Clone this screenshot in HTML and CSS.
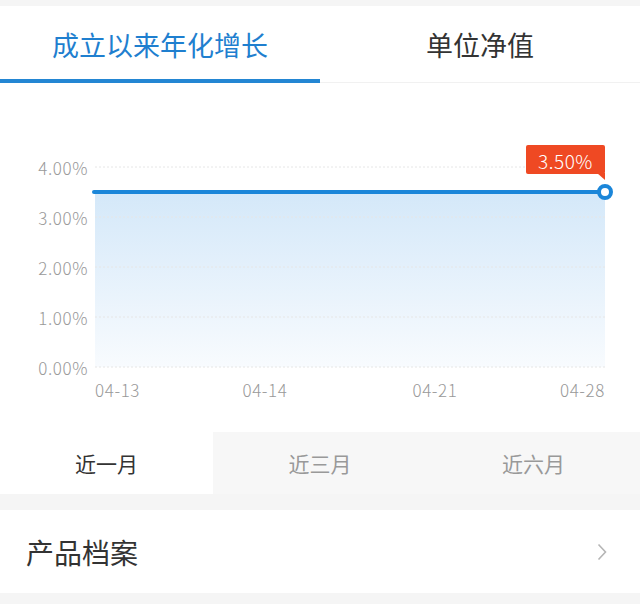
FILE: index.html
```html
<!DOCTYPE html>
<html lang="zh">
<head>
<meta charset="utf-8">
<title>成立以来年化增长</title>
<link rel="stylesheet" href="styles.css">
</head>
<body>
<div class="tabs">
  <div class="tab active">成立以来年化增长</div>
  <div class="tab">单位净值</div>
</div>
<div class="chart">
  <svg class="chart-svg" width="640" height="349" viewBox="0 0 640 349">
    <defs>
      <linearGradient id="fill" x1="0" y1="0" x2="0" y2="1">
        <stop offset="0" stop-color="#d4e8f9"/>
        <stop offset="1" stop-color="#f8fbfe"/>
      </linearGradient>
    </defs>
    <rect x="95" y="109" width="510" height="175" fill="url(#fill)"/>
    <g class="grid">
      <line x1="95" y1="84" x2="605" y2="84"/>
      <line x1="95" y1="134" x2="605" y2="134"/>
      <line x1="95" y1="184" x2="605" y2="184"/>
      <line x1="95" y1="234" x2="605" y2="234"/>
      <line x1="95" y1="284" x2="605" y2="284"/>
    </g>
    <g class="ylab">
      <text x="88" y="84">4.00%</text>
      <text x="88" y="134">3.00%</text>
      <text x="88" y="184">2.00%</text>
      <text x="88" y="234">1.00%</text>
      <text x="88" y="284">0.00%</text>
    </g>
    <g class="xlab">
      <text x="95" y="306" text-anchor="start">04-13</text>
      <text x="265" y="306" text-anchor="middle">04-14</text>
      <text x="435" y="306" text-anchor="middle">04-21</text>
      <text x="605" y="306" text-anchor="end">04-28</text>
    </g>
    <line class="series" x1="94" y1="109" x2="605" y2="109"/>
    <circle cx="605" cy="109" r="6" fill="#fff" stroke="#1b86d9" stroke-width="4"/>
    <rect x="526" y="62" width="79" height="29" rx="2" fill="#ef4923"/>
    <polygon points="597,90 605,90 605,97" fill="#ef4923"/>
    <text class="tip" x="565.5" y="77">3.50%</text>
  </svg>
</div>
<div class="periods">
  <div class="period active">近一月</div>
  <div class="period">近三月</div>
  <div class="period">近六月</div>
</div>
<div class="row">
  <span class="row-title">产品档案</span>
  <svg class="chev" width="10" height="18" viewBox="0 0 10 18"><path d="M1.5 1.5 L8.5 9 L1.5 16.5" fill="none" stroke="#b5b5b5" stroke-width="1.6"/></svg>
</div>
</body>
</html>
```
FILE: styles.css
```css
html, body {
  margin: 0;
  padding: 0;
}
body {
  width: 640px;
  height: 604px;
  background: #f5f5f5;
  font-family: "Noto Sans CJK SC", "Noto Sans", sans-serif;
  overflow: hidden;
}
.tabs {
  margin-top: 6px;
  display: grid;
  grid-template-columns: 320px 320px;
  background: #fff;
}
.tab {
  height: 77px;
  box-sizing: border-box;
  border-bottom: 1px solid #f1f1f1;
  display: flex;
  align-items: center;
  justify-content: center;
  font-size: 27px;
  color: #333;
}
.tab.active {
  color: #1f7fcf;
  border-bottom: 4px solid #2386d3;
  padding-top: 3px;
}
.chart {
  background: #fff;
  height: 349px;
}
.chart-svg {
  display: block;
}
.grid line {
  stroke: #e6e6e6;
  stroke-width: 1;
  stroke-dasharray: 2 2;
}
.ylab text {
  font-size: 17px;
  font-weight: 300;
  letter-spacing: 0.6px;
  fill: #999;
  text-anchor: end;
  dominant-baseline: central;
}
.xlab text {
  font-size: 17px;
  font-weight: 300;
  letter-spacing: 0.6px;
  fill: #999;
  dominant-baseline: central;
}
.series {
  stroke: #1b86d9;
  stroke-width: 4;
  stroke-linecap: round;
}
.tip {
  font-size: 19px;
  font-weight: 300;
  letter-spacing: 0.5px;
  fill: #fff;
  text-anchor: middle;
  dominant-baseline: central;
}
.periods {
  display: grid;
  grid-template-columns: 213px 214px 213px;
  background: #f7f7f7;
  height: 62px;
}
.period {
  display: flex;
  align-items: center;
  justify-content: center;
  font-size: 21px;
  color: #999;
}
.period.active {
  background: #fff;
  color: #333;
}
.row {
  margin-top: 16px;
  height: 83px;
  background: #fff;
  display: flex;
  align-items: center;
  justify-content: space-between;
  padding: 0 33px 0 26px;
}
.row-title {
  font-size: 28px;
  color: #333;
}
.chev {
  display: block;
}
```
